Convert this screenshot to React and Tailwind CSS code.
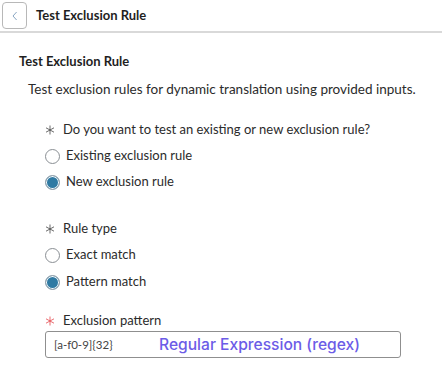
import React from 'react';

const Asterisk = ({ red }) => (
  <svg viewBox="0 0 10 10" className="w-[10px] h-[10px]" fill="none" stroke={red ? '#e5484d' : '#444'} strokeWidth="0.8">
    <line x1="5" y1="0.5" x2="5" y2="9.5" />
    <line x1="1" y1="2.8" x2="9" y2="7.2" />
    <line x1="1" y1="7.2" x2="9" y2="2.8" />
  </svg>
);

const Radio = ({ checked, label }) => (
  <div className="flex items-center gap-[6px] h-[20px]">
    {checked ? (
      <span className="w-[15px] h-[15px] rounded-full border border-[#9aa3ab] bg-[#2f7aa3] shadow-[inset_0_0_0_1px_#ffffff]" />
    ) : (
      <span className="w-[15px] h-[15px] rounded-full border border-[#8a8f94] bg-white" />
    )}
    <span className="text-[13px] text-[#2b2b2b]">{label}</span>
  </div>
);

const Label = ({ red, children }) => (
  <div className="flex items-center gap-[8px] h-[20px]">
    <Asterisk red={red} />
    <span className="text-[13px] text-[#2b2b2b]">{children}</span>
  </div>
);

export default function App() {
  return (
    <div className="w-[442px] h-[379px] bg-white overflow-hidden" style={{ fontFamily: 'Lato, "Open Sans", sans-serif' }}>
      <div className="h-[33px] flex items-center border-b-2 border-[#d9d9d9]">
        <button className="ml-[2px] w-[25px] h-[27px] rounded-[4px] border border-[#b8b8b8] flex items-center justify-center">
          <svg viewBox="0 0 10 12" className="w-[8px] h-[10px]" fill="none" stroke="#6b8fb3" strokeWidth="1">
            <polyline points="7,1 2.5,6 7,11" />
          </svg>
        </button>
        <span className="ml-[9px] text-[13px] font-bold text-[#1f1f1f]">Test Exclusion Rule</span>
      </div>

      <div className="pl-[19px] pt-[19px]">
        <div className="text-[13px] font-bold text-[#1f1f1f] leading-[18px]">Test Exclusion Rule</div>
        <div className="mt-[10px] ml-[9px] text-[13.5px] text-[#2b2b2b] leading-[18px]">
          Test exclusion rules for dynamic translation using provided inputs.
        </div>

        <div className="ml-[26px] mt-[22px] flex flex-col">
          <Label>Do you want to test an existing or new exclusion rule?</Label>
          <div className="mt-[6px] flex flex-col gap-[6px]">
            <Radio label="Existing exclusion rule" />
            <Radio checked label="New exclusion rule" />
          </div>

          <div className="mt-[27px]">
            <Label>Rule type</Label>
          </div>
          <div className="mt-[6px] flex flex-col gap-[7px]">
            <Radio label="Exact match" />
            <Radio checked label="Pattern match" />
          </div>

          <div className="mt-[19px]">
            <Label red>Exclusion pattern</Label>
          </div>
          <div className="w-[356px] h-[27px] rounded-[3px] border border-[#8f8f8f] flex items-center pl-[8px]">
            <span className="w-[105px] text-[11.5px] text-[#444]">[a-f0-9]{'{32}'}</span>
            <span className="text-[15.6px] font-medium text-[#6c5ce7]" style={{ fontFamily: 'Inter, Roboto, sans-serif' }}>
              Regular Expression (regex)
            </span>
          </div>
        </div>
      </div>
    </div>
  );
}
